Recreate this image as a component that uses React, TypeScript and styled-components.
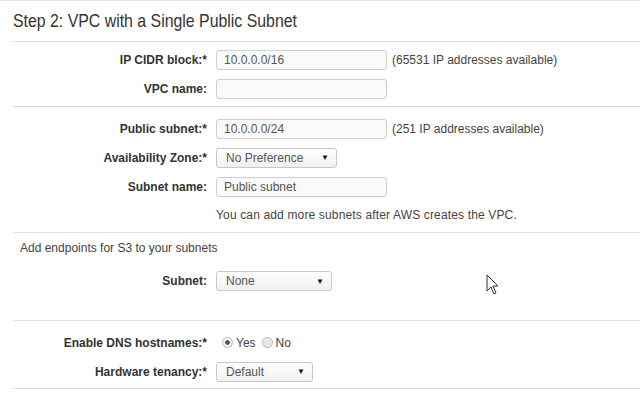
import * as React from 'react'
import styled, { createGlobalStyle } from 'styled-components'

const GlobalStyle = createGlobalStyle`
  html, body {
    margin: 0;
    padding: 0;
    background: #fff;
  }
  body {
    font-family: "Liberation Sans", Arial, sans-serif;
    color: #333;
  }
`

const Page = styled.div`
  position: relative;
  width: 640px;
  height: 398px;
  overflow: hidden;
  border-top: 1px solid #e6e6e6;
  box-sizing: border-box;
`

const Title = styled.h2`
  margin: 0 0 0 13px;
  height: 40px;
  line-height: 40px;
  font-size: 19px;
  font-weight: normal;
  color: #333;
  white-space: nowrap;
  transform: scaleX(0.835);
  transform-origin: left center;
`

const Section = styled.div<{ pad?: string }>`
  margin-left: 13px;
  border-top: 1px solid #dcdcdc;
  padding: ${p => p.pad || '0'};
`

const Row = styled.div<{ h?: number }>`
  display: grid;
  grid-template-columns: 194px 1fr;
  column-gap: 9px;
  align-items: center;
  height: ${p => p.h || 29}px;
`

const Label = styled.label`
  text-align: right;
  font-size: 12px;
  font-weight: bold;
  color: #333;
  white-space: nowrap;
`

const Control = styled.div`
  display: flex;
  align-items: center;
  gap: 5px;
`

const TextInput = styled.div`
  width: 171px;
  height: 20px;
  box-sizing: border-box;
  border: 1px solid #cfcfcf;
  border-radius: 3px;
  background: #fafafa;
  padding-left: 7px;
  font-size: 12px;
  line-height: 18px;
  color: #555;
`

const Hint = styled.span`
  font-size: 12px;
  color: #444;
`

const Select = styled.div<{ w: number }>`
  width: ${p => p.w}px;
  height: 20px;
  box-sizing: border-box;
  border: 1px solid #c8c8c8;
  border-radius: 3px;
  background: linear-gradient(#ffffff, #f0f0f0);
  padding: 0 7px 0 9px;
  display: flex;
  align-items: center;
  justify-content: space-between;
  font-size: 12px;
  color: #555;
`

const Arrow = styled.span`
  font-size: 8px;
  color: #111;
`

const Note = styled.div`
  font-size: 12px;
  color: #444;
  letter-spacing: 0.15px;
`

const SubHeading = styled.div`
  font-size: 12px;
  color: #444;
  padding: 8px 0 0 7px;
  height: 21px;
`

const RadioGroup = styled.div`
  display: flex;
  align-items: center;
  font-size: 12px;
  color: #444;
`

const Radio = styled.span<{ checked?: boolean }>`
  width: 11px;
  height: 11px;
  box-sizing: border-box;
  border-radius: 50%;
  border: 1px solid #bdbdbd;
  background: ${p => (p.checked ? 'radial-gradient(circle, #555 0 2px, #eee 2.5px)' : '#e8e8e8')};
  margin: 0 3px 0 6px;
`

const Cursor = styled.svg`
  position: absolute;
  left: 486px;
  top: 273px;
`

const Input = ({ value }: { value?: string }) => <TextInput>{value}</TextInput>

const Dropdown = ({ value, w }: { value: string; w: number }) => (
  <Select w={w}>
    <span>{value}</span>
    <Arrow>▼</Arrow>
  </Select>
)

const App = () => (
  <Page>
    <GlobalStyle />
    <Title>Step 2: VPC with a Single Public Subnet</Title>

    <Section pad="3px 0 3px">
      <Row>
        <Label>IP CIDR block:*</Label>
        <Control>
          <Input value="10.0.0.0/16" />
          <Hint>(65531 IP addresses available)</Hint>
        </Control>
      </Row>
      <Row>
        <Label>VPC name:</Label>
        <Control><Input /></Control>
      </Row>
    </Section>

    <Section pad="7px 0 4px">
      <Row>
        <Label>Public subnet:*</Label>
        <Control>
          <Input value="10.0.0.0/24" />
          <Hint>(251 IP addresses available)</Hint>
        </Control>
      </Row>
      <Row>
        <Label>Availability Zone:*</Label>
        <Control><Dropdown value="No Preference" w={121} /></Control>
      </Row>
      <Row>
        <Label>Subnet name:</Label>
        <Control><Input value="Public subnet" /></Control>
      </Row>
      <Row h={27}>
        <span />
        <Note>You can add more subnets after AWS creates the VPC.</Note>
      </Row>
    </Section>

    <Section pad="0 0 20px">
      <SubHeading>Add endpoints for S3 to your subnets</SubHeading>
      <Row h={38}>
        <Label>Subnet:</Label>
        <Control><Dropdown value="None" w={116} /></Control>
      </Row>
    </Section>

    <Section pad="7px 0 2px">
      <Row>
        <Label>Enable DNS hostnames:*</Label>
        <RadioGroup>
          <Radio checked />Yes
          <Radio />No
        </RadioGroup>
      </Row>
      <Row>
        <Label>Hardware tenancy:*</Label>
        <Control><Dropdown value="Default" w={97} /></Control>
      </Row>
    </Section>
    <Section />

    <Cursor width="14" height="22" viewBox="0 0 14 22">
      <path d="M1 1 L1 17 L5 13 L8 20 L10 19 L7 12 L12 12 Z" fill="#fff" stroke="#333" strokeWidth="1" strokeLinejoin="round" />
    </Cursor>
  </Page>
)

export default App
